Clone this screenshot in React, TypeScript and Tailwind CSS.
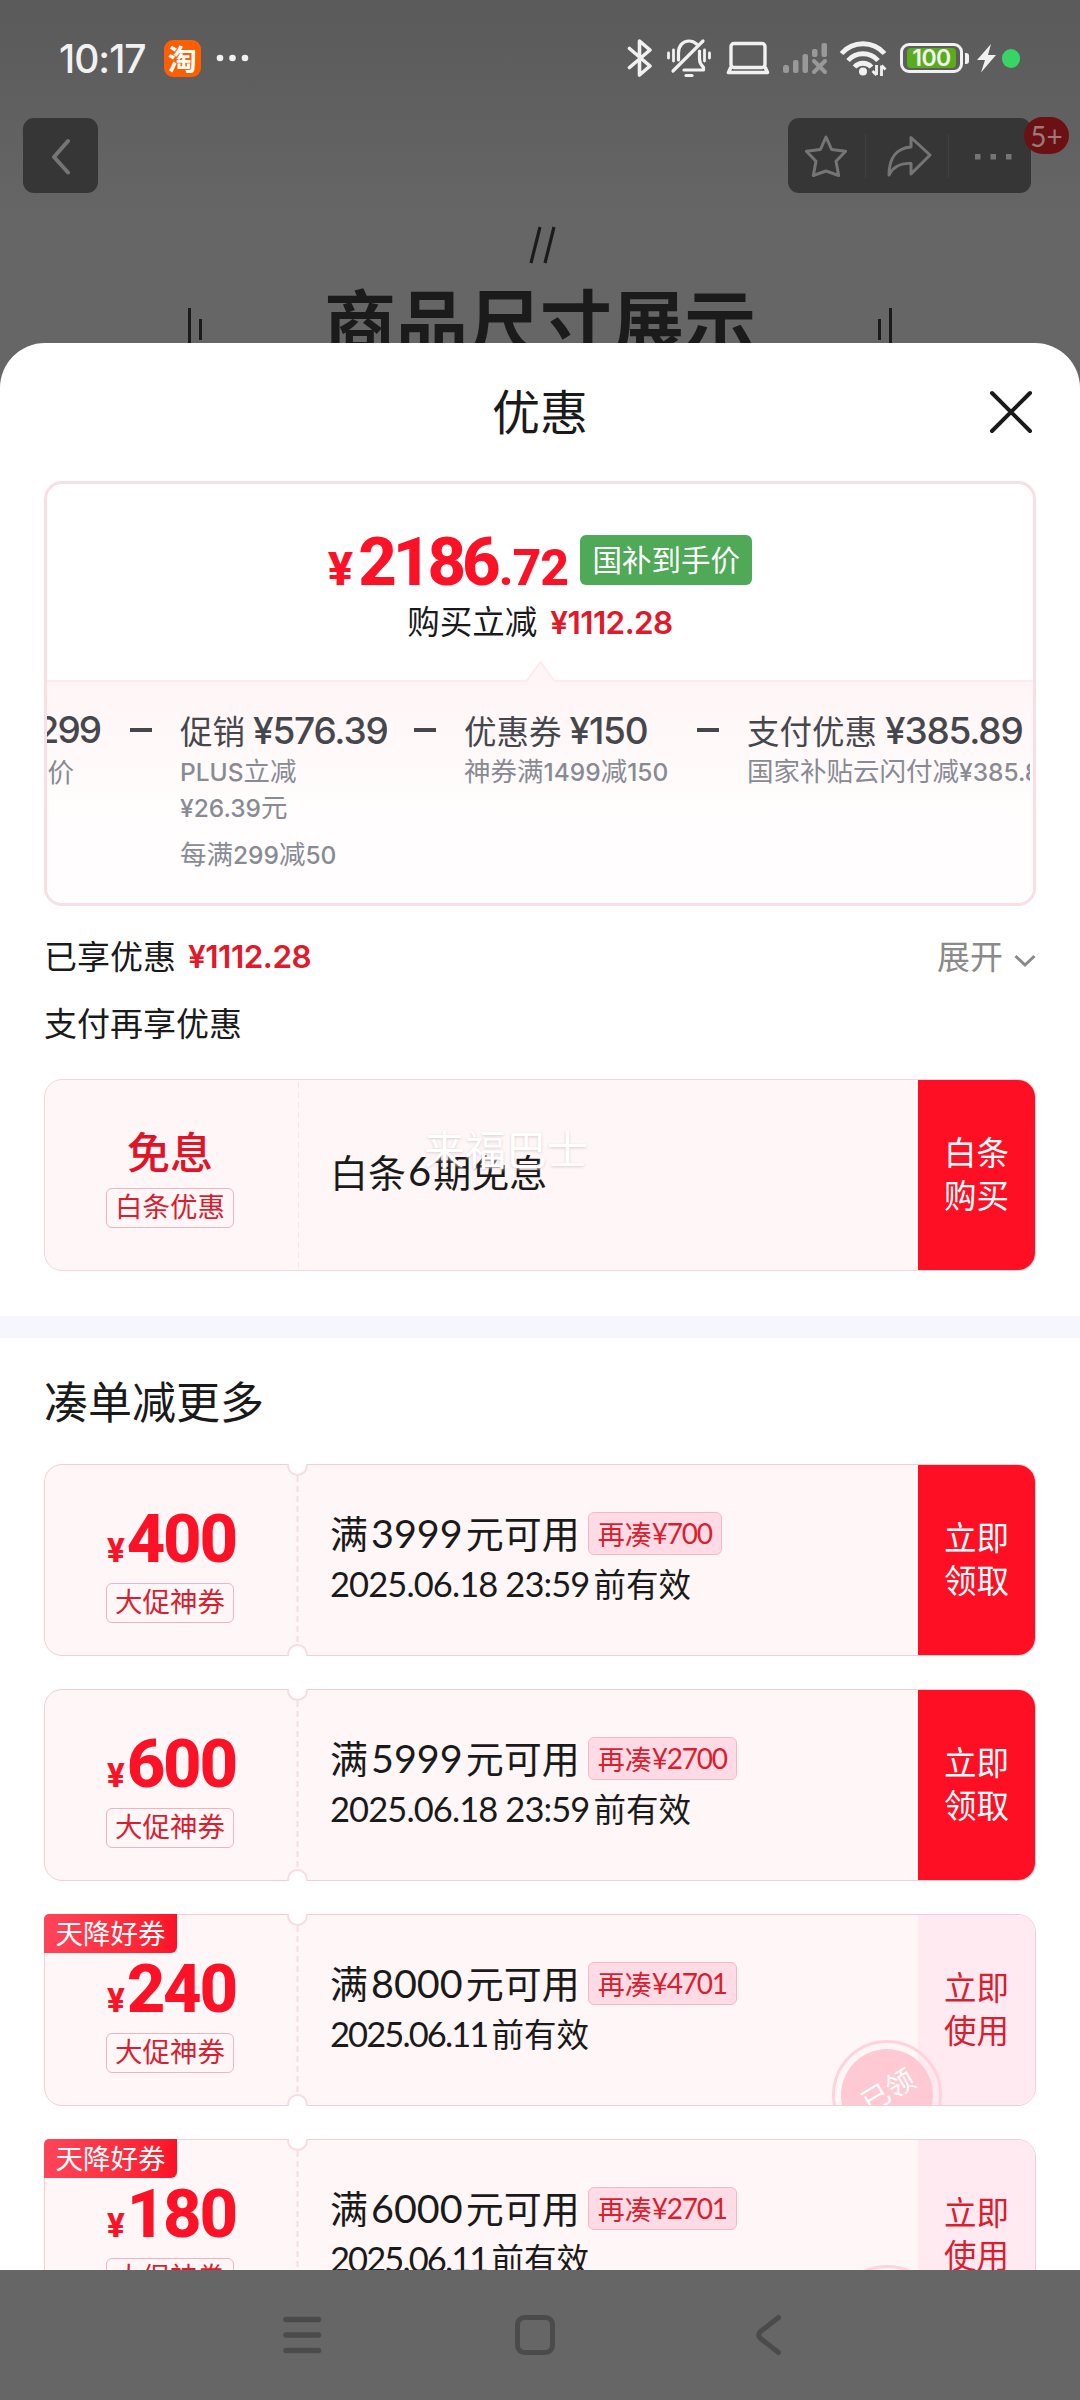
import clsx from "clsx";

type Coupon = {
  amount: string;
  threshold: string;
  short: string;
  expires: string;
  claimed?: boolean;
};

const coupons: Coupon[] = [
  { amount: "400", threshold: "3999", short: "700", expires: "2025.06.18 23:59" },
  { amount: "600", threshold: "5999", short: "2700", expires: "2025.06.18 23:59" },
  { amount: "240", threshold: "8000", short: "4701", expires: "2025.06.11", claimed: true },
  { amount: "180", threshold: "6000", short: "2701", expires: "2025.06.11", claimed: true },
];

const breakdown = [
  { name: "促销", value: "¥576.39", notes: ["PLUS立减\n¥26.39元", "每满299减50"] },
  { name: "优惠券", value: "¥150", notes: ["神券满1499减150"] },
  { name: "支付优惠", value: "¥385.89", notes: ["国家补贴云闪付减¥385.89"] },
];

function StatusBar() {
  return (
    <div className="flex h-[116px] shrink-0 items-center pl-[59px] pr-[60px] text-[#f1f1f1]">
      <span className="font-['Inter'] text-[39px] font-medium leading-none tracking-[-1px]">10:17</span>
      <span className="ml-[18px] flex h-[37px] w-[37px] items-center justify-center rounded-[9px] bg-[#ff5f00] text-[29px] font-bold leading-none text-white">
        淘
      </span>
      <svg className="ml-[15px]" width="34" height="8" viewBox="0 0 34 8" fill="currentColor">
        <circle cx="4" cy="4" r="3.300" />
        <circle cx="16.500" cy="4" r="3.300" />
        <circle cx="29" cy="4" r="3.300" />
      </svg>

      <div className="ml-auto flex items-center">
        <svg width="26" height="40" viewBox="0 0 26 40" fill="none" stroke="currentColor" strokeWidth="3.600" strokeLinecap="round" strokeLinejoin="round">
          <path d="M2.500 10.500 23 28 12.500 37V3L23 12 2.500 29.500" />
        </svg>
        <svg className="ml-[13px]" width="46" height="40" viewBox="0 0 46 40" fill="none" stroke="currentColor" strokeWidth="3.200" strokeLinecap="round" strokeLinejoin="round">
          <path d="M7 33 37 3" />
          <path d="M12.500 22v-7c0-7 4-12 10.500-12 3 0 5.500 1 7.500 3M33.500 13v8c0 4 1.500 6 4 8.500V32H18" />
          <path d="M20 37.500h6" />
          <path d="M2.500 15v5M7.500 12v11M38.500 12v11M43.500 15v5" strokeWidth="2.800" />
        </svg>
        <svg className="ml-[14px]" width="44" height="36" viewBox="0 0 44 36" fill="none" stroke="currentColor" strokeLinejoin="round">
          <rect x="5" y="3.500" width="34" height="24" rx="3" strokeWidth="3.400" />
          <path d="M5 27 2.500 32.500h39L39 27" strokeWidth="3.600" />
        </svg>
        <svg className="ml-[12px]" width="46" height="34" viewBox="0 0 46 34" fill="#999">
          <rect x="1" y="24" width="6" height="8" rx="2.500" />
          <rect x="11" y="19" width="5.500" height="13" rx="2" />
          <rect x="20.500" y="13" width="5.500" height="19" rx="2" />
          <rect x="30" y="8" width="5.500" height="8" rx="2" />
          <rect x="39.500" y="2" width="5.500" height="14" rx="2" />
          <path d="m32 20 11 11M43 20 32 31" stroke="#999" strokeWidth="4" strokeLinecap="round" />
        </svg>
        <svg className="ml-[11px]" width="48" height="38" viewBox="0 0 48 38" fill="none" stroke="currentColor" strokeWidth="4.800">
          <path d="M2.500 14.500C14 1.500 34 1.500 45.500 14.500" />
          <path d="M9 21.500c8-9 22-9 30 0" />
          <path d="M15.500 28c4.500-5 12.500-5 17 0" />
          <circle cx="24" cy="32.500" r="4" fill="currentColor" stroke="none" />
          <path d="M37.500 26v10M37.500 36l-4-4M42.500 37V26.500M42.500 26.500l4 4" strokeWidth="2.800" />
        </svg>
        <div className="ml-[13px] flex h-[30px] w-[63px] items-center rounded-[9px] border-[3px] border-[#f1f1f1] p-1">
          <span className="flex h-5 w-full items-center justify-center rounded-[4px] bg-[#59ad1c] font-['Inter'] text-[23px] font-semibold leading-none tracking-[-0.5px]">
            100
          </span>
        </div>
        <span className="ml-[2px] h-[11px] w-[4px] rounded-r-[3px] bg-[#f1f1f1]" />
        <svg className="ml-[8px]" width="19" height="30" viewBox="0 0 19 30" fill="currentColor">
          <path d="M14 1 0 17h8L4 29.500 19 12h-8z" />
        </svg>
        <span className="ml-[6px] h-[19px] w-[18px] rounded-full bg-[#36d566]" />
      </div>
    </div>
  );
}

function PageHeader() {
  return (
    <div className="relative flex shrink-0 justify-between pl-[23px] pr-[49px] pt-[2px] text-[#757575]">
      <button className="flex h-[75px] w-[75px] items-center justify-center rounded-[11px] bg-[#363636]">
        <svg width="20" height="38" viewBox="0 0 20 38" fill="none" stroke="currentColor" strokeWidth="4" strokeLinecap="round" strokeLinejoin="round">
          <path d="M17 4 3 20l14 15.500" />
        </svg>
      </button>
      <div className="flex h-[75px] w-[243px] items-center rounded-[11px] bg-[#363636]">
        <svg className="ml-[16px]" width="44" height="44" viewBox="0 0 44 44" fill="none" stroke="currentColor" strokeWidth="3" strokeLinejoin="round">
          <path d="m22 3 5.600 12.500 14 1.800-9.600 9.900 2.700 14.300L22 37l-12.700 4.500L12 27.200 2.400 17.300l14-1.800z" />
        </svg>
        <span className="ml-[17px] h-[44px] w-px bg-[#414141]" />
        <svg className="ml-[21px]" width="45" height="42" viewBox="0 0 45 42" fill="none" stroke="currentColor" strokeWidth="3" strokeLinejoin="round">
          <path d="M24 2.500v9.500C9 13 2 24 2 40c3.500-7 11-12.500 22-11.500V39l19-19z" />
        </svg>
        <span className="ml-[16px] h-[44px] w-px bg-[#414141]" />
        <svg className="ml-[26px] mt-[2px]" width="38" height="6" viewBox="0 0 38 6" fill="currentColor">
          <path d="M0 0h5.500v5.500H0zM15.500 0H21v5.500h-5.500zM31 0h5.500v5.500H31z" />
        </svg>
      </div>
      <span className="absolute right-[11px] top-px flex h-[37px] w-[45px] items-center justify-center rounded-full bg-[#6b1114] font-['Lato'] text-[28px] text-[#9a7a7b]">
        5+
      </span>
    </div>
  );
}

function ProductBackdrop() {
  return (
    <div className="flex h-[150px] shrink-0 flex-col items-center overflow-hidden pt-[33px] text-[#1b1b1b]">
      <svg className="ml-[6px] shrink-0" width="30" height="38" viewBox="0 0 30 38" stroke="currentColor" strokeWidth="3.200">
        <path d="M3 37 12 1M17 37 26 1" />
      </svg>
      <div className="flex w-full items-start justify-center">
        <svg className="mt-[44px]" width="14" height="40" viewBox="0 0 14 40" stroke="currentColor" strokeWidth="3">
          <path d="M1.500 0v40M12.500 11v21" />
        </svg>
        <p className="mx-[122px] mt-[11px] whitespace-nowrap text-[72px] font-bold leading-[88px]">商品尺寸展示</p>
        <svg className="mt-[44px]" width="14" height="40" viewBox="0 0 14 40" stroke="currentColor" strokeWidth="3">
          <path d="M12.500 0v40M1.500 11v21" />
        </svg>
      </div>
    </div>
  );
}

function PriceCard() {
  return (
    <div className="mx-[44px] h-[425px] shrink-0 overflow-hidden rounded-[18px] border-[3px] border-[#f9dfe4]">
      <div className="flex h-[196px] flex-col items-center pt-[43px]">
        <div className="flex h-[66px] items-center">
          <div className="mt-[10px] flex items-baseline font-['Roboto'] font-extrabold leading-[66px] text-[#fc1226]">
            <span className="mr-[5px] text-[47px]">¥</span>
            <span className="text-[67px] tracking-[-4px]">2186</span>
            <span className="ml-[2px] text-[50px] tracking-[-1px]">.72</span>
          </div>
          <span className="ml-[12px] flex h-[50px] w-[172px] items-center justify-center rounded-[6px] bg-[#4fa957] pb-[3px] text-[29.500px] text-white">
            国补到手价
          </span>
        </div>
        <p className="mt-[7px] text-[32.500px] leading-[40px]">
          购买立减<span className="ml-[13px] font-['Inter'] text-[31.500px] font-semibold tracking-[-0.6px] text-[#e01a2b]">¥1112.28</span>
        </p>
      </div>
      <div className="relative h-[223px] border-t-2 border-[#fdebee] bg-gradient-to-b from-[#fff5f6] to-[#fffdfd] to-60%">
        <svg className="absolute left-[479px] top-[-21px]" width="29" height="22" viewBox="0 0 29 22">
          <path d="M0 21 14.500 1 29 21" fill="#fff5f6" stroke="#fdebee" strokeWidth="2" />
        </svg>
        <div className="mr-[3px] flex overflow-hidden pt-[25px]">
          <div className="w-[133px] shrink-0 pr-[80px] text-right">
            <p className="float-right whitespace-nowrap font-['Inter'] text-[37px] font-medium leading-[46px] tracking-[-2px] text-[#46474d]">299</p>
            <p className="clear-both whitespace-nowrap pr-[26px] text-[26.500px] leading-[35px] text-[#888b94]">价</p>
          </div>
          {breakdown.map((item, index) => (
            <div key={item.name} className={clsx("relative shrink-0", index === 0 && "w-[284px]", index === 1 && "w-[283px]")}>
              <span className="absolute left-[-50px] top-[21px] h-[4px] w-[22px] bg-[#46474d]" />
              <p className="whitespace-nowrap text-[32.500px] leading-[46px] text-[#46474d]">
                {item.name}
                <span className="ml-[8px] font-['Inter'] text-[37px] font-medium leading-none tracking-[-1.200px]">{item.value}</span>
              </p>
              {item.notes.map((note) => (
                <p key={note} className="mb-[11px] whitespace-pre font-['Inter','Noto_Sans_CJK_SC',sans-serif] text-[26.500px] leading-[36px] text-[#888b94]">
                  {note.split(/([\d.¥A-Z]+)/).map((part, i) => (
                    <span key={i} className={i % 2 ? "text-[24.500px] font-medium leading-none" : ""}>
                      {part}
                    </span>
                  ))}
                </p>
              ))}
            </div>
          ))}
        </div>
      </div>
    </div>
  );
}

function Tag({ children }: { children: string }) {
  return (
    <span className="flex h-[40px] w-[128px] items-center justify-center rounded-[6px] border border-[#eeb4bf] pb-[4px] text-[27.500px] leading-none text-[#d91e30]">
      {children}
    </span>
  );
}

function ActionButton({ lines, pale }: { lines: string[]; pale?: boolean }) {
  return (
    <button
      className={clsx(
        "flex w-[117px] shrink-0 flex-col items-center justify-center pb-[6px] text-[32.500px] leading-[43px]",
        pale ? "bg-[#ffeaf1] text-[#d91e30]" : "bg-[#ff0f23] text-white",
      )}
    >
      {lines.map((line) => (
        <span key={line}>{line}</span>
      ))}
    </button>
  );
}

function Perforation({ notched = true }: { notched?: boolean }) {
  return (
    <>
      <svg className="absolute left-[252px] top-0" width="3" height="190" viewBox="0 0 3 190">
        <path d="M1.500 2v188" stroke={notched ? "#f9dce2" : "#f7e6e9"} strokeWidth={notched ? 2 : 1} strokeDasharray="6 4" />
      </svg>
      {notched && (
        <>
          <span className="absolute left-[243px] top-[-10px] h-[22px] w-[21px] rounded-full border-2 border-[#f8dce2] bg-white" />
          <span className="absolute bottom-[-10px] left-[243px] h-[22px] w-[21px] rounded-full border-2 border-[#f8dce2] bg-white" />
          <span className="absolute left-[242px] top-[-11px] h-[11px] w-[23px] bg-white" />
          <span className="absolute bottom-[-11px] left-[242px] h-[11px] w-[23px] bg-white" />
        </>
      )}
    </>
  );
}

function InstallmentCard() {
  return (
    <div className="relative mx-[44px] flex h-[192px] overflow-hidden rounded-[18px] border border-[#f3d7dc] bg-[#fff6f7]">
      <Perforation notched={false} />
      <div className="flex w-[253px] shrink-0 flex-col items-center pr-[3px] pt-[44px]">
        <span className="text-[43px] font-medium leading-[52px] text-[#e01428]">免息</span>
        <span className="mt-[12px]">
          <Tag>白条优惠</Tag>
        </span>
      </div>
      <p className="flex flex-1 items-center pb-[9px] pl-[32px] text-[38px] text-[#1a1a1a]">
        白条<span className="mx-[2px] font-['Lato'] text-[40px]">6</span>期免息
      </p>
      <ActionButton lines={["白条", "购买"]} />
    </div>
  );
}

function CouponCard({ coupon }: { coupon: Coupon }) {
  return (
    <div className="relative h-[192px] shrink-0">
      <div className="relative flex h-[192px] overflow-hidden rounded-[18px] border border-[#f3cdd5] bg-[#fff6f7]">
        <div className="flex w-[253px] shrink-0 flex-col items-center pt-[41px]">
          <p className="h-[66px] font-['Roboto'] text-[67px] font-extrabold leading-[66px] tracking-[-2.200px] text-[#fc1226]">
            <span className="mr-[4px] text-[33px]">¥</span>
            {coupon.amount}
          </p>
          <span className="mt-[11px] pr-[3px]">
            <Tag>大促神券</Tag>
          </span>
        </div>
        <div className="flex-1 pl-[32px] pt-[43px] text-[#1a1a1a]">
          <div className="flex h-[50px] items-center">
            <p className="whitespace-nowrap font-['Lato','Noto_Sans_CJK_SC',sans-serif] text-[38px] leading-[50px]">
              满<span className="mx-[3px] text-[39.500px]">{coupon.threshold}</span>元可用
            </p>
            <span className="ml-[8px] flex h-[43px] items-center rounded-[6px] border border-[#f2bac8] bg-[#ffdbe6] px-[9px] text-[27px] leading-none text-[#d91e30]">
              再凑<span className="font-['Lato'] text-[28px] leading-none tracking-[-1.200px]">¥{coupon.short}</span>
            </span>
          </div>
          <p className="whitespace-nowrap font-['Lato','Noto_Sans_CJK_SC',sans-serif] text-[32.500px] leading-[51px]">
            <span className={clsx("mr-[4px] text-[34.500px]", coupon.claimed ? "tracking-[-1.900px]" : "tracking-[-0.9px]")}>{coupon.expires}</span>前有效
          </p>
        </div>
        <ActionButton lines={["立即", coupon.claimed ? "使用" : "领取"]} pale={coupon.claimed} />
        {coupon.claimed && (
          <div className="absolute left-[787px] top-[125px] flex h-[110px] w-[110px] items-center justify-center rounded-full border-[3px] border-[#ffd3dc]">
            <div className="flex h-[92px] w-[92px] items-center justify-center rounded-full bg-[#ffc9d4]">
              <span className="-mt-3 -rotate-[31deg] text-[28px] text-white">已领</span>
            </div>
          </div>
        )}
      </div>
      <Perforation />
      {coupon.claimed && (
        <span className="absolute left-0 top-0 flex h-[39px] w-[133px] items-center justify-center rounded-br-[6px] rounded-tl-[5px] bg-gradient-to-r from-[#ff4459] to-[#fb1125] pb-[2px] text-[27.500px] leading-none text-white">
          天降好券
        </span>
      )}
    </div>
  );
}

function NavBar() {
  return (
    <div className="flex h-[130px] shrink-0 items-center bg-[#666] text-[#4b4b4b]">
      <svg className="ml-[282px]" width="40" height="40" viewBox="0 0 40 40" stroke="currentColor" strokeWidth="5.500" strokeLinecap="round">
        <path d="M4 4.500h32.500M4 20h32.500M4 35.500h32.500" />
      </svg>
      <svg className="ml-[192px]" width="42" height="42" viewBox="0 0 42 42" fill="none" stroke="currentColor" strokeWidth="5">
        <rect x="3.500" y="3.500" width="35" height="35" rx="7" />
      </svg>
      <svg className="ml-[199px]" width="28" height="42" viewBox="0 0 28 42" fill="none" stroke="currentColor" strokeWidth="5" strokeLinecap="round" strokeLinejoin="round">
        <path d="M23.500 3.500 5.500 17.500Q2 21 5.500 24.500l18 14" />
      </svg>
    </div>
  );
}

export default function App() {
  return (
    <div className="relative flex h-[2400px] w-[1080px] flex-col overflow-hidden bg-[#666] bg-[linear-gradient(#5a5a5a,#666_220px)] font-['Noto_Sans_CJK_SC',sans-serif] text-[#1a1a1a]">
      <StatusBar />
      <PageHeader />
      <ProductBackdrop />

      <section className="relative flex min-h-0 flex-1 flex-col overflow-hidden rounded-t-[45px] bg-white">
        <header className="relative flex h-[138px] shrink-0 items-center justify-center pb-[6px] text-[48px] leading-none">
          优惠
          <svg className="absolute right-[47px] top-[47px]" width="44" height="44" viewBox="0 0 44 44" stroke="currentColor" strokeWidth="4" strokeLinecap="round">
            <path d="m3 3 38 38M41 3 3 41" />
          </svg>
        </header>

        <PriceCard />

        <div className="mt-[29px] flex h-[42px] shrink-0 items-center px-[44px] text-[33px]">
          已享优惠
          <span className="ml-[12px] mt-[2px] font-['Inter'] text-[31.500px] font-semibold tracking-[-0.5px] text-[#e01a2b]">¥1112.28</span>
          <span className="ml-auto text-[#8a8a8a]">展开</span>
          <svg className="ml-[11px] mt-[9px]" width="22" height="14" viewBox="0 0 22 14" fill="none" stroke="#8a8a8a" strokeWidth="3">
            <path d="m1.500 2 9.500 9 9.500-9" />
          </svg>
        </div>
        <h3 className="mt-[24px] h-[42px] shrink-0 px-[44px] text-[33px] leading-[42px]">支付再享优惠</h3>

        <div className="relative mt-[36px] shrink-0">
          <InstallmentCard />
          <span className="absolute left-[424px] top-[41px] text-[41px] leading-[54px] text-white [text-shadow:0_1px_3px_#dccdd0]">来福巴士</span>
        </div>

        <div className="mt-[45px] h-[22px] shrink-0 bg-[#f4f7fc]" />
        <h2 className="mt-[33px] h-[58px] shrink-0 px-[44px] text-[44px] leading-[58px]">凑单减更多</h2>

        <div className="mt-[35px] flex shrink-0 flex-col gap-[33px] px-[44px]">
          {coupons.map((coupon) => (
            <CouponCard key={coupon.amount} coupon={coupon} />
          ))}
        </div>
      </section>

      <NavBar />
    </div>
  );
}
